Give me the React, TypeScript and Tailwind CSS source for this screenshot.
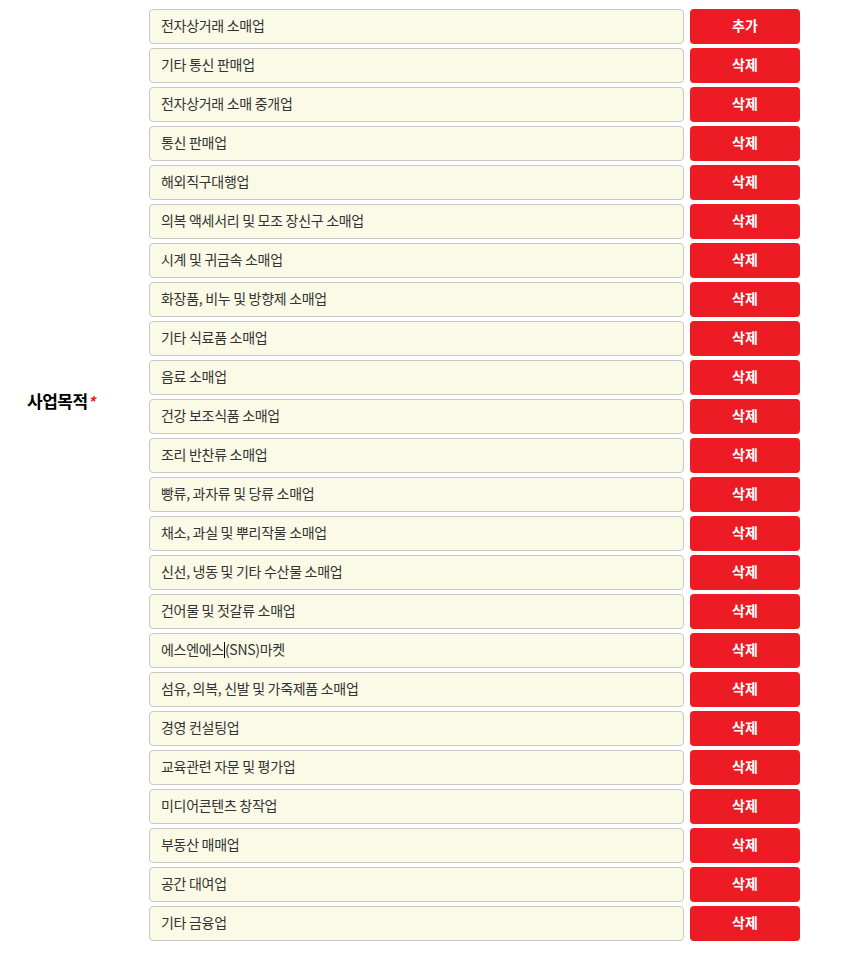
const items = [
  '전자상거래 소매업',
  '기타 통신 판매업',
  '전자상거래 소매 중개업',
  '통신 판매업',
  '해외직구대행업',
  '의복 액세서리 및 모조 장신구 소매업',
  '시계 및 귀금속 소매업',
  '화장품, 비누 및 방향제 소매업',
  '기타 식료품 소매업',
  '음료 소매업',
  '건강 보조식품 소매업',
  '조리 반찬류 소매업',
  '빵류, 과자류 및 당류 소매업',
  '채소, 과실 및 뿌리작물 소매업',
  '신선, 냉동 및 기타 수산물 소매업',
  '건어물 및 젓갈류 소매업',
  '에스엔에스(SNS)마켓',
  '섬유, 의복, 신발 및 가죽제품 소매업',
  '경영 컨설팅업',
  '교육관련 자문 및 평가업',
  '미디어콘텐츠 창작업',
  '부동산 매매업',
  '공간 대여업',
  '기타 금융업',
];

export default function App() {
  return (
    <div className="w-[845px] h-[958px] bg-white flex font-['Noto_Sans_CJK_KR','Noto_Sans',sans-serif]">
      <div className="w-[149px] pl-[27px] pt-[388px]">
        <span className="text-[17px] font-bold text-black tracking-[-0.5px]">사업목적</span>
        <span className="text-[15px] font-bold italic text-[#ed1c24]">*</span>
      </div>
      <div className="pt-[9px] flex flex-col gap-[4px]">
        {items.map((item, i) => (
          <div key={item} className="flex gap-[6px]">
            <div className="w-[535px] h-[35px] rounded-[4px] border border-[#c8c8c8] bg-[#fafae6] flex items-center pl-[11px] pb-[2px] text-[14px] text-[#333] tracking-[-0.3px]">
              {i === 16 ? (
                <>
                  에스엔에스<span className="inline-block w-px h-[16px] bg-black" />(SNS)마켓
                </>
              ) : (
                item
              )}
            </div>
            <button className="w-[110px] h-[35px] pb-[2px] rounded-[4px] bg-[#ed1c24] text-white text-[14px] font-semibold">
              {i === 0 ? '추가' : '삭제'}
            </button>
          </div>
        ))}
      </div>
    </div>
  );
}
